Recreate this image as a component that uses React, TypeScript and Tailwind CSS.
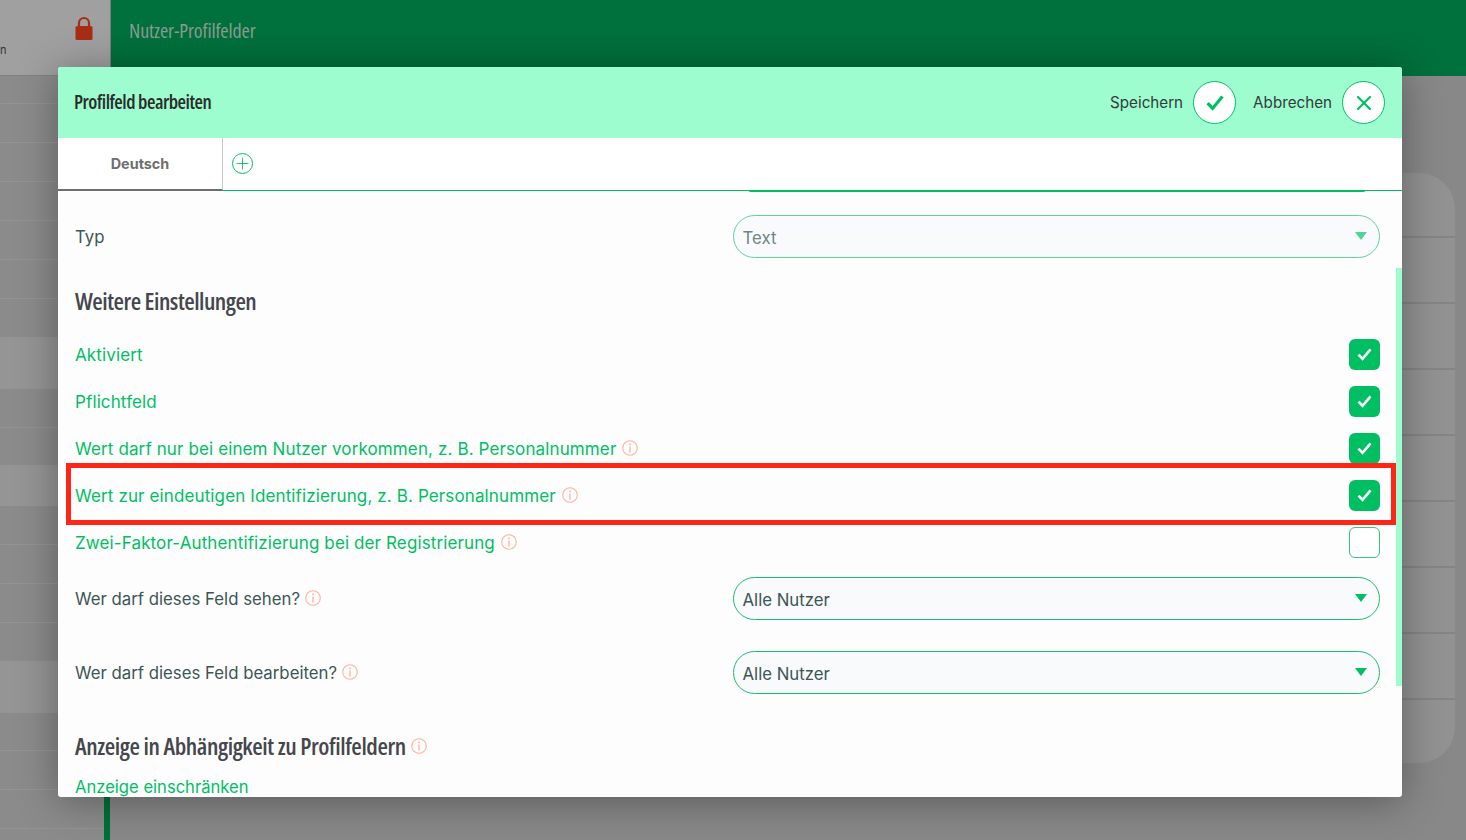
import { Plus, X } from 'lucide-react';

const sideRows = [
  { h: 28 }, { h: 39 }, { h: 39 }, { h: 39 }, { h: 39 }, { h: 39 }, { h: 39 },
  { h: 51, light: true }, { h: 39 }, { h: 38 }, { h: 40, light: true }, { h: 39 }, { h: 39 }, { h: 39 }, { h: 39 },
  { h: 51, light: true }, { h: 38 }, { h: 39 }, { h: 39 }, { h: 39 },
];

const heading = "font-['Open_Sans',sans-serif] [font-stretch:75%]";

function Info({ className = '' }: { className?: string }) {
  return (
    <svg viewBox="0 0 16 16" className={`w-[16px] h-[16px] shrink-0 text-[#ffb09f] ${className}`} fill="none" stroke="currentColor">
      <circle cx="8" cy="8" r="7.3" strokeWidth="1.1" />
      <circle cx="8" cy="4.3" r="0.9" fill="currentColor" stroke="none" />
      <path d="M8 6.6v5.8" strokeWidth="1.3" />
    </svg>
  );
}

function Tick({ className = '' }: { className?: string }) {
  return (
    <svg viewBox="0 0 18 16" className={className} fill="none" stroke="currentColor" strokeWidth="3.2">
      <path d="M1.6 8.2l5 5.2L16.4 1.6" />
    </svg>
  );
}

function Field({ value, muted }: { value: string; muted?: boolean }) {
  return (
    <div
      className={`w-[647px] h-[43px] rounded-[22px] border bg-[#f8fafc] flex items-center justify-between pl-[8.5px] pr-[12px] text-[16.8px] ${
        muted ? 'border-[#5fd39b] text-[#6f8684]' : 'border-[#19bd6d] text-[#3c5655]'
      }`}
    >
      <span className="pt-[4px]">{value}</span>
      <span
        className={`-mt-[2px] w-0 h-0 border-x-[6px] border-x-transparent border-t-[8px] ${
          muted ? 'border-t-[#52d295]' : 'border-t-[#00bf63]'
        }`}
      />
    </div>
  );
}

function CheckRow({ label, info, checked = true }: { label: string; info?: boolean; checked?: boolean }) {
  return (
    <div className="h-[31px] mb-[16px] flex items-center justify-between text-[#00bf63] tracking-[0.12px]">
      <div className="flex items-center gap-[6px] mt-[2px]">
        <span>{label}</span>
        {info && <Info className="-mt-[4px]" />}
      </div>
      {checked ? (
        <div className="w-[31px] h-[31px] rounded-[6px] bg-[#00bf63] flex items-center justify-center">
          <Tick className="w-[15px] h-[13px] text-white" />
        </div>
      ) : (
        <div className="w-[31px] h-[31px] rounded-[6px] border border-[#35c584] bg-white" />
      )}
    </div>
  );
}

function SelectRow({ label, className = '' }: { label: string; className?: string }) {
  return (
    <div className={`flex items-start justify-between text-[#3c5655] text-[16.8px] ${className}`}>
      <div className="flex items-center gap-[5px] pt-[10px]">
        <span>{label}</span>
        <Info className="-mt-[4px]" />
      </div>
      <Field value="Alle Nutzer" />
    </div>
  );
}

export default function App() {
  return (
    <div className="relative h-[840px] w-[1466px] overflow-hidden bg-[#888888] font-['Inter',sans-serif]">
      <div className="flex h-full">
        <aside className="w-[104px] shrink-0">
          <div className="h-[76px] bg-[#a0a0a0] border-b border-[#808080]" />
          {sideRows.map((r, i) => (
            <div
              key={i}
              style={{ height: r.h }}
              className={r.light ? 'bg-[#959595]' : 'bg-[#8b8b8b] border-b border-[#949494]'}
            />
          ))}
        </aside>
        <div className="w-[6px] shrink-0 flex flex-col">
          <div className="h-[76px] bg-[#a0a0a0]" />
          <div className="grow bg-[#00703c]" />
        </div>
        <main className="grow flex flex-col">
          <header className="h-[76px] bg-[#00703c] pl-[18px] pt-[16px] border-l border-[#7c7c7c]">
            <h1 className={`${heading} text-[20px] tracking-[-0.1px] font-normal text-[#8a9c90]`}>Nutzer-Profilfelder</h1>
          </header>
          <div className="flex justify-end pr-[11px] pt-[97px]">
            <div className="w-[400px] h-[590px] rounded-[36px] bg-[#929292] flex flex-col pt-[63px]">
              {[0, 1, 2, 3, 4, 5, 6, 7].map((i) => (
                <div key={i} className="h-[66px] shrink-0 border-t-2 border-[#858585]" />
              ))}
            </div>
          </div>
        </main>
      </div>

      <svg viewBox="0 0 18 24" className="absolute left-[75px] top-[16px] w-[18px] h-[24px] text-[#a82d17]" fill="currentColor">
        <path d="M4 11V7a5 5 0 0 1 10 0v4" fill="none" stroke="currentColor" strokeWidth="2.2" />
        <rect x="0.5" y="10" width="17" height="14" rx="1.5" />
      </svg>
      <span className="absolute left-0 top-[42px] text-[11px] text-[#333]">n</span>

      <div className="absolute left-[58px] top-[67px] w-[1344px] h-[730px] rounded-[3px] overflow-hidden flex flex-col bg-[#fdfdfe] shadow-[0_4px_40px_rgba(0,0,0,0.35)]">
        <div className="h-[71px] shrink-0 bg-[#9dfdcf] flex items-center justify-between pl-[16px] pr-[17px]">
          <h2 className={`${heading} font-semibold text-[19.5px] tracking-[-0.5px] -mt-[2px] text-[#2b2b2b]`}>Profilfeld bearbeiten</h2>
          <div className="flex items-center text-[15.2px] text-[#333b3a]">
            <span className="pt-[1px]">Speichern</span>
            <div className="ml-[10px] w-[43px] h-[43px] rounded-full bg-white border border-[#00bf63] flex items-center justify-center">
              <Tick className="w-[18px] h-[16px] text-[#00bf63]" />
            </div>
            <span className="ml-[17px] pt-[1px]">Abbrechen</span>
            <div className="ml-[10px] w-[43px] h-[43px] rounded-full bg-white border border-[#00bf63] flex items-center justify-center">
              <X size={24} strokeWidth={2.2} className="text-[#00bf63]" />
            </div>
          </div>
        </div>

        <div className="h-[53px] shrink-0 bg-white flex items-stretch border-b border-[#00bf63]">
          <div className="w-[165px] -mb-px border-b-2 border-[#6e6e6e] border-r border-r-[#c8c8c8] flex items-center justify-center text-[14.4px] font-bold text-[#6e6e6e]">
            Deutsch
          </div>
          <div className="ml-[9px] mb-[2px] self-center w-[21px] h-[21px] rounded-full border border-[#00bf63] flex items-center justify-center">
            <Plus size={19} strokeWidth={1.1} className="text-[#00bf63]" />
          </div>
        </div>

        <div className="relative grow overflow-hidden pl-[17px] pr-[22px] text-[17px]">
          <div className="absolute left-[690px] right-[36px] top-[-2px] h-[3px] rounded-b-[20px] bg-[#00bf63]" />
          <div className="flex items-start justify-between pt-[24px] text-[#3c5655] text-[16.8px]">
            <span className="pt-[10px]">Typ</span>
            <Field value="Text" muted />
          </div>
          <h3 className={`${heading} font-semibold text-[24px] tracking-[-0.5px] leading-[32px] mt-[27px] mb-[22px] text-[#45474d]`}>Weitere Einstellungen</h3>
          <CheckRow label="Aktiviert" />
          <CheckRow label="Pflichtfeld" />
          <CheckRow label="Wert darf nur bei einem Nutzer vorkommen, z. B. Personalnummer" info />
          <CheckRow label="Wert zur eindeutigen Identifizierung, z. B. Personalnummer" info />
          <CheckRow label="Zwei-Faktor-Authentifizierung bei der Registrierung" info checked={false} />
          <SelectRow label="Wer darf dieses Feld sehen?" className="mt-[19px]" />
          <SelectRow label="Wer darf dieses Feld bearbeiten?" className="mt-[31px]" />
          <div className="flex items-center gap-[5px] mt-[36px]">
            <h3 className={`${heading} font-semibold text-[24px] tracking-[-0.41px] leading-[32px] text-[#45474d]`}>Anzeige in Abhängigkeit zu Profilfeldern</h3>
            <Info />
          </div>
          <p className="mt-[13px] text-[16.6px] text-[#00bf63]">Anzeige einschränken</p>

          <div className="absolute right-0 top-[77px] w-[6px] h-[418px] bg-[#9dfdcf]" />
          <div className="absolute left-[8px] top-[272px] w-[1330px] h-[62px] border-[5px] border-[#ff2617]" />
        </div>
      </div>
    </div>
  );
}
